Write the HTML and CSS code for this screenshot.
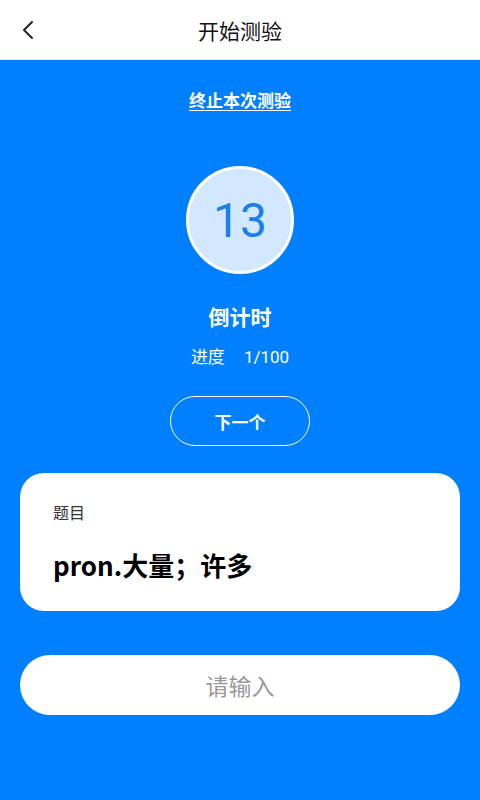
FILE: index.html
```html
<!DOCTYPE html>
<html lang="zh">
<head>
<meta charset="utf-8">
<link rel="stylesheet" href="styles.css">
</head>
<body>
<div class="page">
  <header class="topbar">
    <span class="back">
      <svg width="14" height="20" viewBox="0 0 14 20"><path d="M11 2 L3 10 L11 18" fill="none" stroke="#222" stroke-width="2" stroke-linecap="round" stroke-linejoin="round"/></svg>
    </span>
    <h1 class="title">开始测验</h1>
  </header>
  <main class="main">
    <a class="stop">终止本次测验</a>
    <div class="timer"><span>13</span></div>
    <div class="label">倒计时</div>
    <div class="progress"><span>进度</span><span>1/100</span></div>
    <button class="next">下一个</button>
    <section class="card">
      <div class="card-label">题目</div>
      <div class="card-question">pron.大量；许多</div>
    </section>
    <div class="input">请输入</div>
  </main>
</div>
</body>
</html>
```
FILE: styles.css
```css
* { box-sizing: border-box; }
html, body { margin: 0; padding: 0; }
body {
  width: 480px;
  height: 800px;
  font-family: Roboto, "Noto Sans CJK SC", sans-serif;
  background: #0080ff;
  overflow: hidden;
}
.page { display: flex; flex-direction: column; height: 800px; }
.topbar {
  height: 60px;
  background: #fff;
  border-bottom: 1px solid #e6e6e6;
  display: flex;
  align-items: center;
  justify-content: center;
  position: relative;
}
.back {
  position: absolute;
  left: 21px;
  top: 20px;
  width: 14px;
  height: 20px;
  display: flex;
}
.title {
  margin: 0;
  font-size: 21px;
  font-weight: 400;
  color: #111;
  font-family: "Noto Sans CJK SC", sans-serif;
}
.main {
  flex: 1;
  background: #0080ff;
  display: flex;
  flex-direction: column;
  align-items: center;
  padding: 0 20px;
}
.stop {
  margin-top: 28px;
  color: #fff;
  font-size: 17px;
  font-weight: 700;
  text-decoration: underline;
  text-underline-offset: 3px;
  line-height: 24px;
  font-family: "Noto Sans CJK SC", sans-serif;
}
.timer {
  margin-top: 54px;
  width: 108px;
  height: 108px;
  border-radius: 50%;
  border: 3px solid #fff;
  background: #d1e8ff;
  display: flex;
  align-items: center;
  justify-content: center;
}
.timer span {
  font-size: 48px;
  color: #1b7fe8;
  font-family: Roboto, sans-serif;
  line-height: 1;
  margin-top: 2px;
}
.label {
  margin-top: 27px;
  color: #fff;
  font-size: 21px;
  font-weight: 700;
  line-height: 30px;
  font-family: "Noto Sans CJK SC", sans-serif;
}
.progress {
  margin-top: 14px;
  color: #fff;
  font-size: 17px;
  line-height: 24px;
  display: flex;
  gap: 19px;
}
.next {
  margin-top: 27px;
  width: 140px;
  height: 50px;
  border-radius: 25px;
  border: 1.5px solid #fff;
  background: transparent;
  color: #fff;
  font-size: 17px;
  font-weight: 700;
  font-family: "Noto Sans CJK SC", sans-serif;
}
.card {
  margin-top: 27px;
  width: 440px;
  height: 138px;
  background: #fff;
  border-radius: 24px;
  padding: 27px 33px 0;
}
.card-label {
  font-size: 16px;
  color: #333;
  line-height: 24px;
  font-family: "Noto Sans CJK SC", sans-serif;
}
.card-question {
  margin-top: 22px;
  font-size: 26px;
  font-weight: 700;
  color: #000;
  line-height: 38px;
  font-family: "Noto Sans CJK SC", sans-serif;
}
.input {
  margin-top: 44px;
  width: 440px;
  height: 60px;
  border-radius: 30px;
  background: #fff;
  display: flex;
  align-items: center;
  justify-content: center;
  font-size: 23px;
  color: #999;
  font-family: "Noto Sans CJK SC", sans-serif;
}
```
